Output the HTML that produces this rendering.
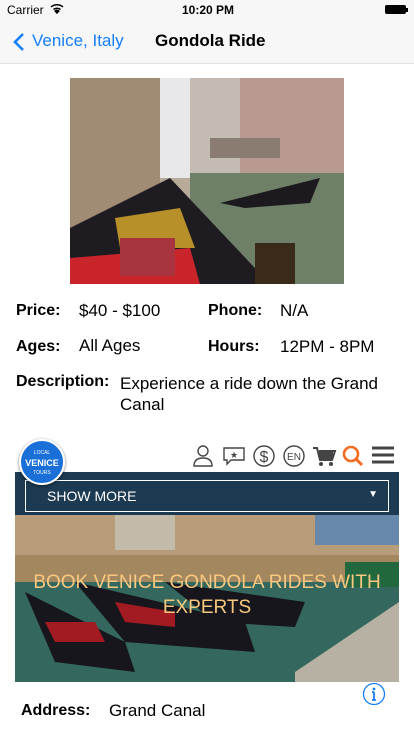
<!DOCTYPE html>
<html><head><meta charset="utf-8"><style>
*{margin:0;padding:0;box-sizing:border-box}
body{width:414px;height:736px;overflow:hidden;background:#fff;font-family:"Liberation Sans",sans-serif;position:relative;color:#000}
.abs{position:absolute}
.b{font-weight:bold;font-size:16px}
.v{font-size:17px}
</style></head><body>
<div class="abs" style="left:0;top:0;width:414px;height:64px;background:#f7f7f7;border-bottom:1px solid #e4e4e4"></div>
<div class="abs" style="left:7px;top:3px;font-size:12px">Carrier</div>
<svg class="abs" style="left:50px;top:3px" width="14" height="11" viewBox="0 0 14 11"><path d="M1 4a9 9 0 0 1 12 0M3.5 6.5a5.5 5.5 0 0 1 7 0M7 10l-1.8-2a2.6 2.6 0 0 1 3.6 0z" stroke="#000" stroke-width="1.5" fill="#000" fill-opacity="0"/><path d="M7 10l-1.8-2a2.6 2.6 0 0 1 3.6 0z" fill="#000"/></svg>
<div class="abs" style="left:182px;top:3px;font-size:12px;font-weight:bold">10:20 PM</div>
<div class="abs" style="left:385px;top:5px;width:21px;height:9px;background:#000;border-radius:2px"></div>
<div class="abs" style="left:406px;top:8px;width:2px;height:4px;background:#000"></div>
<svg class="abs" style="left:12px;top:32px" width="14" height="20" viewBox="0 0 14 20"><path d="M11 2L3 10l8 8" stroke="#157efb" stroke-width="2.6" fill="none"/></svg>
<div class="abs" style="left:32px;top:31px;font-size:17px;color:#157efb">Venice, Italy</div>
<div class="abs" style="left:155px;top:31px;font-size:17px;font-weight:bold">Gondola Ride</div>

<svg class="abs" style="left:70px;top:78px" width="274" height="206" viewBox="0 0 274 206">
<rect width="274" height="206" fill="#b8aa98"/>
<rect x="0" y="0" width="90" height="150" fill="#a08b74"/>
<rect x="90" y="0" width="50" height="100" fill="#e8e8ea"/>
<rect x="120" y="0" width="50" height="100" fill="#c4bcb2"/>
<rect x="170" y="0" width="104" height="110" fill="#b89a92"/>
<rect x="140" y="60" width="70" height="20" fill="#8a7c70"/>
<rect x="120" y="95" width="154" height="111" fill="#6e8068"/>
<path d="M150 125 L250 100 L240 125 L175 130z" fill="#1c1a1e"/>
<path d="M0 150 L100 100 L200 206 L0 206z" fill="#1e1c20"/>
<path d="M45 140 L110 130 L125 170 L50 170z" fill="#b8902a"/>
<path d="M0 180 L120 170 L130 206 L0 206z" fill="#c8242a"/>
<rect x="50" y="160" width="55" height="38" fill="#a83440"/>
<rect x="185" y="165" width="40" height="41" fill="#3a2a1a"/>
</svg>

<div class="abs b" style="left:16px;top:302px">Price:</div>
<div class="abs v" style="left:79px;top:301px">$40 - $100</div>
<div class="abs b" style="left:208px;top:302px">Phone:</div>
<div class="abs v" style="left:280px;top:301px">N/A</div>
<div class="abs b" style="left:16px;top:338px">Ages:</div>
<div class="abs v" style="left:79px;top:336px">All Ages</div>
<div class="abs b" style="left:208px;top:338px">Hours:</div>
<div class="abs v" style="left:280px;top:337px">12PM - 8PM</div>
<div class="abs b" style="left:16px;top:373px">Description:</div>
<div class="abs v" style="left:120px;top:373px;width:290px;line-height:21px">Experience a ride down the Grand Canal</div>

<!-- banner -->
<div class="abs" style="left:15px;top:472px;width:384px;height:210px;background:#1c3a52;overflow:hidden">
<svg width="384" height="210" style="position:absolute;left:0;top:0" viewBox="0 0 384 210">
<rect y="43" width="384" height="167" fill="#6a8a80"/>
<rect y="43" width="384" height="40" fill="#d8b890"/>
<rect x="100" y="43" width="60" height="35" fill="#e6dcc8"/>
<rect x="300" y="43" width="84" height="30" fill="#7aa0c8"/>
<rect y="83" width="384" height="30" fill="#c0a070"/>
<rect y="110" width="384" height="100" fill="#3e7a6e"/>
<path d="M10 120 L110 170 L120 200 L40 190z" fill="#1a1a22"/>
<path d="M60 110 L230 150 L240 180 L110 170z" fill="#1a1a22"/>
<path d="M150 110 L290 130 L280 155 L200 150z" fill="#1a1a22"/>
<path d="M30 150 L80 150 L90 170 L40 170z" fill="#c02028"/>
<path d="M100 130 L160 140 L160 155 L110 150z" fill="#c02028"/>
<path d="M280 200 L384 130 L384 210 L280 210z" fill="#d8d0c0"/>
<rect x="330" y="90" width="54" height="25" fill="#2a7a4a"/>
</svg>
<div style="position:absolute;left:0;top:43px;width:384px;height:167px;background:rgba(0,0,0,0.15)"></div>
<div style="position:absolute;left:0;top:98px;width:384px;text-align:center;color:#f8c880;font-size:19px;line-height:25px">BOOK VENICE GONDOLA RIDES WITH<br>EXPERTS</div>
</div>
<div class="abs" style="left:25px;top:480px;width:364px;height:32px;border:1px solid #fff;color:#fff;font-size:14px;padding:7px 0 0 21px">SHOW MORE<span style="position:absolute;right:10px;top:8px;font-size:10px">▼</span></div>

<!-- logo -->
<div class="abs" style="left:19px;top:439px;width:46px;height:46px;border-radius:50%;background:#1a6fd8;border:2px solid #fff;box-shadow:0 1px 3px rgba(0,0,0,.5);color:#fff;text-align:center;font-size:9px;line-height:10px;padding-top:7px">
<div style="font-size:5px">LOCAL</div><div style="font-weight:bold">VENICE</div><div style="font-size:5px">TOURS</div></div>

<!-- icons -->
<svg class="abs" style="left:192px;top:443px" width="206" height="26" viewBox="0 0 206 26">
<g fill="none" stroke="#444" stroke-width="1.4">
<circle cx="11" cy="8" r="5"/><path d="M2 23c0-6 4-8 9-8s9 2 9 8z"/>
<path d="M32 5h20v12H39l-4 4v-4h-3z"/>
<circle cx="72" cy="13" r="10"/>
<circle cx="102" cy="13" r="10"/>
</g>
<text x="42" y="15" font-size="9" text-anchor="middle" fill="#444">★</text>
<text x="72" y="19" font-size="16" text-anchor="middle" fill="#444" font-family="Liberation Sans">$</text>
<text x="102" y="17" font-size="10" text-anchor="middle" fill="#444" font-family="Liberation Sans">EN</text>
<path d="M121 5h4l3 12h12l3-9h-16" fill="none" stroke="#444" stroke-width="2"/>
<rect x="127" y="8" width="14" height="8" fill="#444"/>
<circle cx="129" cy="21" r="2" fill="#444"/><circle cx="139" cy="21" r="2" fill="#444"/>
<circle cx="159" cy="11" r="7" fill="none" stroke="#f26b21" stroke-width="2.6"/>
<path d="M164 16l6 6" stroke="#f26b21" stroke-width="3"/>
<path d="M180 5h22M180 12h22M180 19h22" stroke="#444" stroke-width="3"/>
</svg>

<svg class="abs" style="left:362px;top:682px" width="24" height="24" viewBox="0 0 24 24"><circle cx="12" cy="12" r="10.5" fill="none" stroke="#157efb" stroke-width="1.3"/><circle cx="12" cy="7" r="1.4" fill="#157efb"/><path d="M12 10v8M10 18h4M10 10h2" stroke="#157efb" stroke-width="1.8"/></svg>
<div class="abs b" style="left:21px;top:702px">Address:</div>
<div class="abs v" style="left:109px;top:701px">Grand Canal</div>
</body></html>
